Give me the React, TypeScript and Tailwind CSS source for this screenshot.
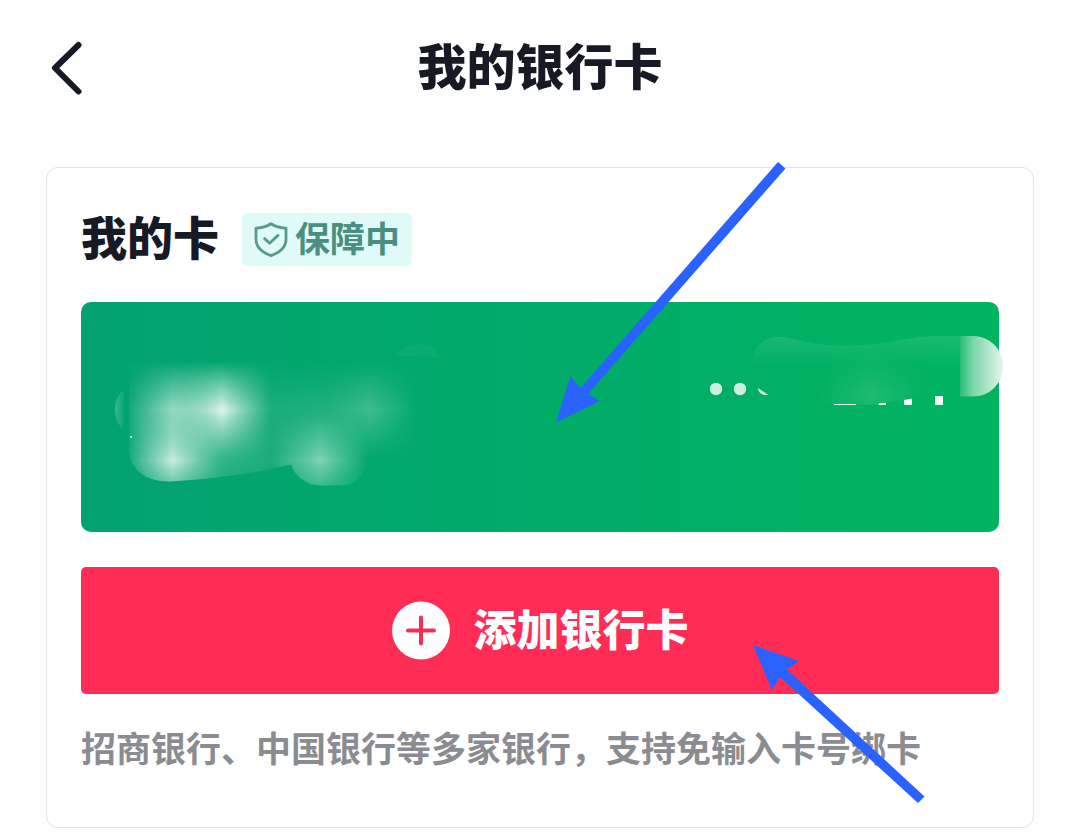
import { useState } from 'react';

const FONT = "font-['Noto_Sans_CJK_SC','Noto_Sans',sans-serif]";

// grid nodes of the smudge: centre and brightness
const NODES = [
  { x: 173, y: 410, o: 0.6 },
  { x: 222, y: 410, o: 0.88 },
  { x: 271, y: 410, o: 0.1 },
  { x: 320, y: 410, o: 0.12 },
  { x: 370, y: 410, o: 0.24 },
  { x: 173, y: 460, o: 0.8 },
  { x: 222, y: 460, o: 0.2 },
  { x: 271, y: 460, o: 0.1 },
  { x: 320, y: 460, o: 0.5 },
];

function BackIcon() {
  return (
    <svg viewBox="0 0 32 54" className="h-[54px] w-8" fill="none">
      <path
        d="M28.5 4 L5 27 L28.5 50.5"
        stroke="#171925"
        strokeWidth="6"
        strokeLinecap="round"
        strokeLinejoin="round"
      />
    </svg>
  );
}

function ShieldIcon() {
  return (
    <svg viewBox="0 0 34 36" className="h-9 w-[34px]" fill="none" stroke="#599c8f" strokeLinecap="round" strokeLinejoin="round">
      <path
        d="M17 1.7 C12.6 4.5 7.4 5.9 2 6.1 V17 C2 25.2 8.4 30.6 17 33.6 C25.6 30.6 32 25.2 32 17 V6.1 C26.6 5.9 21.4 4.5 17 1.7 Z"
        strokeWidth="2.8"
      />
      <path d="M10.6 16.6 L15.6 21.2 L24 13.4" strokeWidth="2.8" />
    </svg>
  );
}

function PlusIcon() {
  return (
    <svg viewBox="0 0 58 58" className="size-[58px] overflow-visible">
      <circle cx="29" cy="28.5" r="29" fill="#fff" />
      <path d="M29 15.5 V41.5 M16 28.5 H42" stroke="#ee3157" strokeWidth="4" strokeLinecap="round" />
    </svg>
  );
}

// bank name and card number are smudged out
function CardSmudge() {
  return (
    <svg viewBox="81 302 918 230" className="block w-full overflow-visible" aria-hidden="true">
      <defs>
        <linearGradient id="tentX">
          <stop offset="0" stopColor="#fff" stopOpacity="0" />
          <stop offset="0.5" stopColor="#fff" stopOpacity="1" />
          <stop offset="1" stopColor="#fff" stopOpacity="0" />
        </linearGradient>
        <linearGradient id="tentY" x1="0" y1="0" x2="0" y2="1">
          <stop offset="0" stopColor="#fff" stopOpacity="0" />
          <stop offset="0.5" stopColor="#fff" stopOpacity="1" />
          <stop offset="1" stopColor="#fff" stopOpacity="0" />
        </linearGradient>
        <mask id="fadeY" x="0" y="0" width="1" height="1" maskContentUnits="objectBoundingBox">
          <rect width="1" height="1" fill="url(#tentY)" />
        </mask>
        <linearGradient id="band" gradientUnits="userSpaceOnUse" x1="0" y1="336" x2="0" y2="366">
          <stop offset="0" stopColor="#fff" stopOpacity="0.1" />
          <stop offset="1" stopColor="#fff" stopOpacity="0" />
        </linearGradient>
        <linearGradient id="cap" gradientUnits="userSpaceOnUse" x1="958" y1="0" x2="1003" y2="0">
          <stop offset="0" stopColor="#1dba71" />
          <stop offset="0.35" stopColor="#7fd6ac" />
          <stop offset="0.7" stopColor="#b4e7cd" />
          <stop offset="1" stopColor="#e4f6ed" />
        </linearGradient>
        <linearGradient id="edge" gradientUnits="userSpaceOnUse" x1="115" y1="0" x2="125" y2="0">
          <stop offset="0" stopColor="#fff" stopOpacity="0.2" />
          <stop offset="1" stopColor="#fff" stopOpacity="0.02" />
        </linearGradient>
        <clipPath id="smudge">
          <path d="M129 355 H440 V462 H367 Q361 485 342 485.5 H320 C304 485 294 474 291 464.5 Q235 478 170 481.5 C146 482 129 470 129 448 Z" />
        </clipPath>
        <clipPath id="glare">
          <path d="M760 340 H960 V390 C925 396 905 400 880 404 Q850 407 816 405 Z" />
        </clipPath>
      </defs>

      <path d="M124 390 C112 398 112 420 123 429 Z" fill="url(#edge)" />
      <path d="M396 356 C406 341 430 339 440 357 Z" fill="#fff" fillOpacity="0.04" />
      <g clipPath="url(#smudge)">
        {NODES.map((n) => (
          <rect
            key={`${n.x}-${n.y}`}
            x={n.x - 49}
            y={n.y - 49}
            width="98"
            height="98"
            fill="url(#tentX)"
            fillOpacity={n.o}
            mask="url(#fadeY)"
          />
        ))}
      </g>
      <circle cx="131" cy="437" r="1" fill="#e5f9ef" />

      <circle cx="716" cy="389" r="6.2" fill="#cbf0df" />
      <circle cx="740" cy="389" r="6.2" fill="#cbf0df" />
      <path d="M758 388 L768 394.8 C763 396 758 393 758 388 Z" fill="#cbf0df" />

      <path
        d="M751 366 C752 346 764 337 778 337 C796 337 805 345 840 345.5 C890 346 900 337 935 336 H962 V366 Z"
        fill="url(#band)"
      />
      <g clipPath="url(#glare)">
        <rect x="816" y="350" width="110" height="90" fill="url(#tentX)" fillOpacity="0.12" mask="url(#fadeY)" />
      </g>
      <path d="M960 336 H973 A30 30 0 0 1 973 396.5 H960 Z" fill="url(#cap)" />

      <path d="M834 404 H856 V405 H834 Z M879 403.5 L886 402.7 V405 H878 Z M904 400 L912 398.5 V405 H904 Z M935 396 H943 V405 H935 Z" fill="#f0fff8" />
    </svg>
  );
}

function Arrows() {
  return (
    <svg viewBox="0 0 1080 839" className="pointer-events-none absolute top-0 left-0 w-full" fill="#2962ff" aria-hidden="true">
      <polygon points="778,162 785.5,168.5 588,394 600,401 556,422.5 570.5,376 580.5,388" />
      <polygon points="753,645 799,661 787,669.5 924.5,796.5 918,803 780,677 772,690" />
    </svg>
  );
}

export default function App() {
  const [adding, setAdding] = useState(false);

  return (
    <div className={`relative min-h-screen bg-[#fefefe] pb-[11px] text-[#171925] ${FONT}`}>
      <header className="grid grid-cols-[80px_1fr_80px] items-center px-[46px] pt-8 pb-[63px]">
        <button type="button" aria-label="返回" className="flex h-[72px] items-center pl-1">
          <BackIcon />
        </button>
        <h1 className="pb-2 text-center text-[49px] leading-[64px] font-black">我的银行卡</h1>
      </header>

      <main className="mx-[46px] rounded-xl border border-[#e3e3e5] bg-white px-[34px] pt-[45px] pb-[50px]">
        <div className="flex items-center gap-[23px]">
          <h2 className="pb-2 text-[46px] leading-[45px] font-black">我的卡</h2>
          <span className="flex items-center gap-[7px] rounded-md bg-[#e0faf7] px-3 text-[35px] leading-[47px] font-bold text-[#488f82]">
            <ShieldIcon />
            <span className="pb-1.5">保障中</span>
          </span>
        </div>

        <div className="mt-9 rounded-[10px] bg-linear-to-r from-[#03a271] to-[#00b45f]">
          <CardSmudge />
        </div>

        <button
          type="button"
          aria-pressed={adding}
          onClick={() => setAdding(!adding)}
          className="mt-[35px] flex h-[127px] w-full items-center justify-center gap-6 rounded-[5px] bg-[#ff2c55] text-[43px] leading-[58px] font-black text-white"
        >
          <PlusIcon />
          <span className="pb-2">添加银行卡</span>
        </button>

        <p className="mt-[23px] text-[35px] leading-[60px] font-bold text-[#8b8c91]">
          招商银行、中国银行等多家银行，支持免输入卡号绑卡
        </p>
      </main>

      <Arrows />
    </div>
  );
}
